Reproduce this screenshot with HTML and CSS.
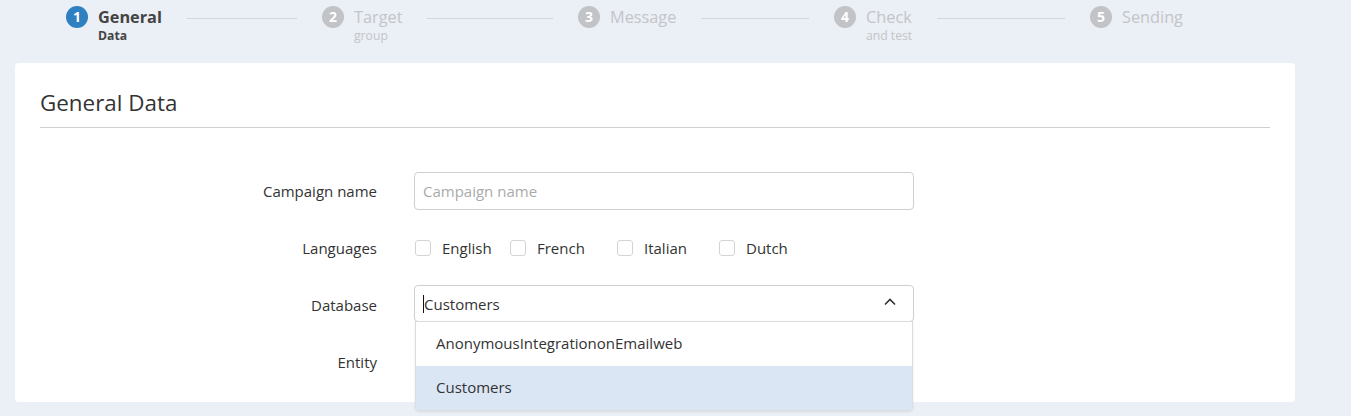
FILE: index.html
```html
<!DOCTYPE html>
<html>
<head>
<meta charset="utf-8">
<link rel="stylesheet" href="styles.css">
</head>
<body>
<div class="stepper">
  <div class="step active">
    <span class="circle">1</span>
    <div class="slabel"><div class="stitle">General</div><div class="ssub">Data</div></div>
    <span class="line"></span>
  </div>
  <div class="step">
    <span class="circle">2</span>
    <div class="slabel"><div class="stitle">Target</div><div class="ssub">group</div></div>
    <span class="line"></span>
  </div>
  <div class="step">
    <span class="circle">3</span>
    <div class="slabel"><div class="stitle">Message</div></div>
    <span class="line"></span>
  </div>
  <div class="step">
    <span class="circle">4</span>
    <div class="slabel"><div class="stitle">Check</div><div class="ssub">and test</div></div>
    <span class="line"></span>
  </div>
  <div class="step last">
    <span class="circle">5</span>
    <div class="slabel"><div class="stitle">Sending</div></div>
  </div>
</div>

<div class="card">
  <h1 class="card-title">General Data</h1>
  <div class="form">
    <div class="row">
      <label class="lbl">Campaign name</label>
      <div class="field"><input class="input" type="text" placeholder="Campaign name"></div>
    </div>
    <div class="row">
      <label class="lbl">Languages</label>
      <div class="field checks">
        <span class="check"><span class="box"></span>English</span>
        <span class="check"><span class="box"></span>French</span>
        <span class="check"><span class="box"></span>Italian</span>
        <span class="check"><span class="box"></span>Dutch</span>
      </div>
    </div>
    <div class="row">
      <label class="lbl">Database</label>
      <div class="field">
        <div class="select">
          <span class="caret"></span><span>Customers</span>
          <svg class="chev" width="12" height="8" viewBox="0 0 12 8"><path d="M1 6.5 L6 1.5 L11 6.5" fill="none" stroke="#333" stroke-width="1.6"/></svg>
        </div>
        <div class="menu">
          <div class="opt">AnonymousIntegrationonEmailweb</div>
          <div class="opt sel">Customers</div>
        </div>
      </div>
    </div>
    <div class="row">
      <label class="lbl">Entity</label>
      <div class="field"></div>
    </div>
  </div>
</div>
</body>
</html>
```
FILE: styles.css
```css
html, body { margin: 0; padding: 0; }
body {
  background: #ebeff6;
  font-family: "Open Sans", "Noto Sans", sans-serif;
  color: #333;
  height: 416px;
  overflow: hidden;
}
.stepper {
  display: flex;
  padding-left: 66px;
  height: 63px;
}
.step {
  display: flex;
  align-items: flex-start;
  width: 256px;
  flex: none;
}
.step.last { width: auto; }
.circle {
  width: 22px;
  height: 22px;
  border-radius: 50%;
  background: #c1c3c6;
  color: #fff;
  font-weight: 700;
  font-size: 14px;
  line-height: 22px;
  text-align: center;
  margin-top: 6px;
  flex: none;
}
.step.active .circle { background: #2f80c1; }
.slabel { margin-left: 10px; }
.stitle {
  font-size: 16.3px;
  line-height: 22px;
  margin-top: 6px;
  color: #c3c5c8;
}
.ssub {
  font-size: 12.2px;
  line-height: 16px;
  color: #c3c5c8;
}
.step.active .stitle, .step.active .ssub { color: #444; font-weight: 700; }
.line {
  flex: 1;
  height: 1px;
  background: #d2d5d9;
  margin: 18px 25px 0 25px;
}
.card {
  margin-left: 15px;
  width: 1230px;
  height: 339px;
  background: #fff;
  border-radius: 4px;
  padding: 0 25px;
  box-sizing: content-box;
}
.card-title {
  margin: 0;
  padding-top: 25px;
  padding-bottom: 9px;
  font-size: 22.4px;
  line-height: 30px;
  font-weight: 400;
  color: #333;
  border-bottom: 1px solid #cfcfcf;
}
.form {
  display: flex;
  flex-direction: column;
  gap: 19px;
  padding-top: 44px;
}
.row {
  display: flex;
  align-items: center;
  height: 38px;
}
.lbl {
  width: 337px;
  text-align: right;
  font-size: 15px;
  margin-right: 37px;
  flex: none;
}
.field {
  width: 500px;
  position: relative;
}
.input {
  box-sizing: border-box;
  width: 500px;
  height: 38px;
  border: 1px solid #cfcfcf;
  border-radius: 4px;
  padding: 0 8px;
  font-family: inherit;
  font-size: 15px;
  color: #333;
  outline: none;
}
.input::placeholder { color: #aaa; }
.checks { display: flex; align-items: center; font-size: 15px; }
.check { display: flex; align-items: center; }
.box {
  width: 14px;
  height: 14px;
  border: 1px solid #d4d4d4;
  border-radius: 3px;
  margin-left: 1px;
  margin-right: 11px;
}
.check:nth-child(1) { width: 95px; }
.check:nth-child(2) { width: 107px; }
.check:nth-child(3) { width: 102px; }
.select {
  box-sizing: border-box;
  width: 500px;
  height: 37px;
  margin-top: -3px;
  border: 1px solid #cfcfcf;
  border-radius: 4px;
  display: flex;
  align-items: center;
  padding-left: 8px;
  font-size: 15px;
  position: relative;
}
.caret {
  width: 1px;
  height: 18px;
  background: #111;
}
.chev {
  position: absolute;
  right: 17px;
  top: 12px;
}
.menu {
  position: absolute;
  left: 1px;
  top: 33px;
  width: 498px;
  background: #fff;
  border: 1px solid #dcdcdc;
  border-radius: 0 0 4px 4px;
  box-shadow: 0 1px 3px rgba(0,0,0,0.08);
  box-sizing: border-box;
  z-index: 2;
}
.opt {
  height: 44px;
  line-height: 42px;
  padding-left: 20px;
  font-size: 15px;
  color: #333;
}
.opt.sel { background: #dae6f3; }
```
